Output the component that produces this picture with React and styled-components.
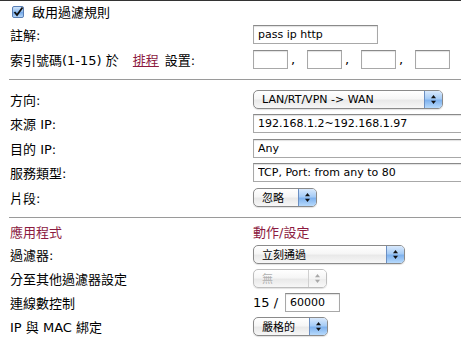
import React from 'react';
import styled, { createGlobalStyle } from 'styled-components';

const Global = createGlobalStyle`
  body {
    margin: 0;
    background: #fff;
    overflow: hidden;
  }
`;

const Page = styled.div`
  width: 461px;
  height: 341px;
  overflow: hidden;
  border-top: 1px solid #333;
  box-sizing: border-box;
  font-family: "DejaVu Sans", "Noto Sans CJK TC", sans-serif;
  font-size: 13px;
  color: #000;
`;

const Section = styled.div`
  padding-top: ${(p) => p.top || 0}px;
`;

const Row = styled.div`
  display: grid;
  grid-template-columns: 243px 1fr;
  align-items: center;
  height: ${(p) => p.h}px;
  padding-left: 10px;
  white-space: nowrap;
`;

const Label = styled.div`
  display: flex;
  align-items: center;
  color: ${(p) => (p.head ? '#8c1a3f' : '#000')};
`;

const Value = styled.div`
  display: flex;
  align-items: center;
`;

const Divider = styled.div`
  height: 1px;
  background: #9a9a9a;
  margin: ${(p) => p.mt}px 0 0 9px;
`;

const Link = styled.a`
  color: #8c1a3f;
  text-decoration: underline;
  margin: 0 6px 0 14px;
`;

const Check = styled.span`
  display: inline-flex;
  width: 12px;
  height: 12px;
  margin: 0 8px 0 2px;
`;

const Field = styled.input`
  box-sizing: border-box;
  width: ${(p) => p.w}px;
  height: 19px;
  margin: 0;
  padding: 0 4px;
  border: 1px solid #a8a8a8;
  border-top-color: #8a8a8a;
  box-shadow: inset 0 1px 1px rgba(0, 0, 0, 0.12);
  font-family: "DejaVu Sans", "Noto Sans CJK TC", sans-serif;
  font-size: 11px;
  color: #000;
  background: #fff;
  outline: none;
`;

const Comma = styled.span`
  width: 19px;
  padding-left: 3px;
  box-sizing: border-box;
  font-size: 13px;
`;

const Select = styled.div`
  box-sizing: border-box;
  display: flex;
  align-items: stretch;
  width: ${(p) => p.w}px;
  height: 19px;
  border: 1px solid ${(p) => (p.disabled ? '#bdbdbd' : '#8a8a8a')};
  border-radius: 5px;
  overflow: hidden;
  background: linear-gradient(#ffffff, #f6f6f6 45%, #e9e9e9 55%, #f7f7f7);
  box-shadow: 0 1px 1px rgba(0, 0, 0, 0.12);
  font-family: "DejaVu Sans", "Noto Sans CJK TC", sans-serif;
  font-size: 11px;
  color: ${(p) => (p.disabled ? '#b0b0b0' : '#000')};
`;

const SelectText = styled.span`
  flex: 1;
  display: flex;
  align-items: center;
  padding-left: 8px;
`;

const Stepper = styled.span`
  width: 17px;
  display: flex;
  align-items: center;
  justify-content: center;
  border-left: 1px solid ${(p) => (p.disabled ? '#d0d0d0' : '#6b8fc2')};
  background: ${(p) =>
    p.disabled
      ? 'linear-gradient(#fff, #f4f4f4 50%, #ececec 51%, #f8f8f8)'
      : 'linear-gradient(#d9e9fc, #a6ccf6 45%, #7fb2ee 55%, #b7dafc)'};
`;

const Arrows = ({ disabled }) => (
  <svg width="7" height="11" viewBox="0 0 7 11">
    <path d="M3.5 1 L6 4.2 L1 4.2 Z" fill={disabled ? '#a8a8a8' : '#111'} />
    <path d="M3.5 10 L6 6.8 L1 6.8 Z" fill={disabled ? '#a8a8a8' : '#111'} />
  </svg>
);

const Dropdown = ({ w, text, disabled }) => (
  <Select w={w} disabled={disabled}>
    <SelectText>{text}</SelectText>
    <Stepper disabled={disabled}>
      <Arrows disabled={disabled} />
    </Stepper>
  </Select>
);

const CheckIcon = () => (
  <svg width="12" height="12" viewBox="0 0 12 12">
    <defs>
      <linearGradient id="cb" x1="0" y1="0" x2="0" y2="1">
        <stop offset="0" stopColor="#d6e8fb" />
        <stop offset="0.5" stopColor="#8fbcef" />
        <stop offset="0.51" stopColor="#6fa5e8" />
        <stop offset="1" stopColor="#bcdcfb" />
      </linearGradient>
    </defs>
    <rect x="0.5" y="0.5" width="11" height="11" rx="1.5" fill="url(#cb)" stroke="#5a7fb5" />
    <path d="M2.5 6 L5 9 L10.5 1.5" fill="none" stroke="#111" strokeWidth="1.8" />
  </svg>
);

export default function App() {
  return (
    <Page>
      <Global />
      <Section>
        <Row h={21}>
          <Label>
            <Check><CheckIcon /></Check>
            啟用過濾規則
          </Label>
        </Row>
        <Row h={24}>
          <Label>註解:</Label>
          <Value><Field w={125} defaultValue="pass ip http" /></Value>
        </Row>
        <Row h={26}>
          <Label>
            索引號碼(1-15) 於<Link href="#">排程</Link>設置:
          </Label>
          <Value>
            <Field w={35} />
            <Comma>,</Comma>
            <Field w={35} />
            <Comma>,</Comma>
            <Field w={35} />
            <Comma>,</Comma>
            <Field w={35} />
          </Value>
        </Row>
      </Section>
      <Divider mt={7} />

      <Section top={7}>
        <Row h={24.5}>
          <Label>方向:</Label>
          <Value><Dropdown w={190} text="LAN/RT/VPN -> WAN" /></Value>
        </Row>
        <Row h={24.5}>
          <Label>來源 IP:</Label>
          <Value><Field w={230} defaultValue="192.168.1.2~192.168.1.97" /></Value>
        </Row>
        <Row h={24.5}>
          <Label>目的 IP:</Label>
          <Value><Field w={230} defaultValue="Any" /></Value>
        </Row>
        <Row h={24.5}>
          <Label>服務類型:</Label>
          <Value><Field w={230} defaultValue="TCP, Port: from any to 80" /></Value>
        </Row>
        <Row h={24.5}>
          <Label>片段:</Label>
          <Value><Dropdown w={64} text="忽略" /></Value>
        </Row>
      </Section>
      <Divider mt={7.5} />

      <Section top={3}>
        <Row h={21}>
          <Label head>應用程式</Label>
          <Label head>動作/設定</Label>
        </Row>
        <Row h={24}>
          <Label>過濾器:</Label>
          <Value><Dropdown w={152} text="立刻通過" /></Value>
        </Row>
        <Row h={24}>
          <Label>分至其他過濾器設定</Label>
          <Value><Dropdown w={74} text="無" disabled /></Value>
        </Row>
        <Row h={24}>
          <Label>連線數控制</Label>
          <Value>
            <span style={{ marginRight: 7 }}>15 /</span>
            <Field w={55} defaultValue="60000" />
          </Value>
        </Row>
        <Row h={24}>
          <Label>IP 與 MAC 綁定</Label>
          <Value><Dropdown w={75} text="嚴格的" /></Value>
        </Row>
      </Section>
    </Page>
  );
}
